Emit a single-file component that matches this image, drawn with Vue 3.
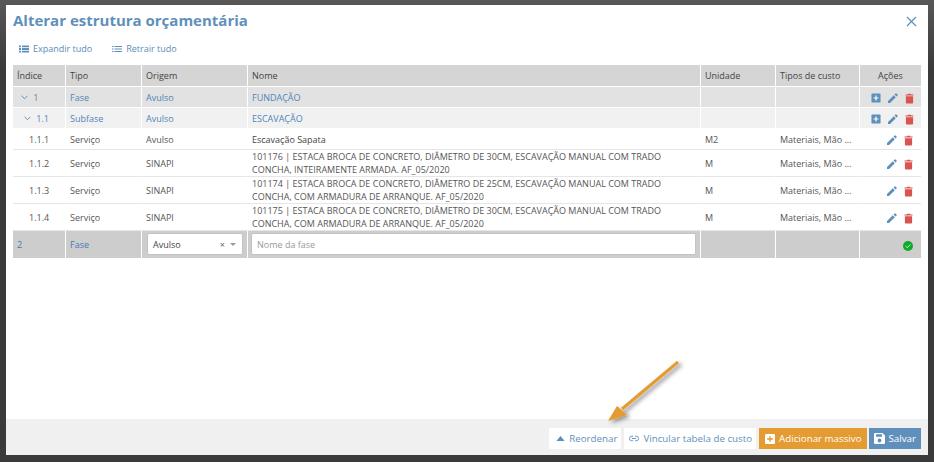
<template>
  <div class="overlay">
    <div class="modal">
      <header class="modal-head">
        <h1>Alterar estrutura orçamentária</h1>
        <svg class="close" width="11" height="11" viewBox="0 0 11 11">
          <path d="M1 1l9 9M10 1l-9 9" stroke="#5f90bc" stroke-width="1.2" fill="none" />
        </svg>
      </header>

      <div class="tree-actions">
        <span class="tree-link">
          <svg width="10" height="10" viewBox="0 0 10 10" fill="#5f90bc">
            <path d="M0 1.5h2v1.8H0zM3 1.5h7v1.8H3zM0 4.1h2v1.8H0zM3 4.1h7v1.8H3zM0 6.7h2v1.8H0zM3 6.7h7v1.8H3z" />
          </svg>
          Expandir tudo
        </span>
        <span class="tree-link">
          <svg width="10" height="10" viewBox="0 0 10 10" fill="#5f90bc">
            <path d="M0 2h1.5v1H0zM2.5 2H10v1H2.5zM0 4.5h1.5v1H0zM2.5 4.5H10v1H2.5zM0 7h1.5v1H0zM2.5 7H10v1H2.5z" />
          </svg>
          Retrair tudo
        </span>
      </div>

      <table class="grid">
        <colgroup>
          <col v-for="w in widths" :key="w.name" :style="{ width: w.px + 'px' }" />
        </colgroup>
        <thead>
          <tr>
            <th>Índice</th>
            <th>Tipo</th>
            <th>Origem</th>
            <th>Nome</th>
            <th>Unidade</th>
            <th>Tipos de custo</th>
            <th class="center">Ações</th>
          </tr>
        </thead>
        <tbody>
          <tr v-for="row in rows" :key="row.idx" :class="[row.kind, { single: row.nome.length === 1 }]">
            <td :class="'indent-' + row.depth">
              <svg v-if="row.kind !== 'item'" class="chev" width="7" height="5" viewBox="0 0 7 5">
                <path d="M.6.8l2.9 2.9L6.4.8" fill="none" stroke="#5f90bc" stroke-width="1" />
              </svg>
              {{ row.idx }}
            </td>
            <td>{{ row.tipo }}</td>
            <td>{{ row.origem }}</td>
            <td class="name">
              <template v-for="(line, i) in row.nome" :key="i">
                <div>{{ line }}</div>
              </template>
            </td>
            <td>{{ row.unidade }}</td>
            <td>{{ row.custo }}</td>
            <td class="acts">
              <svg v-if="row.kind !== 'item'" width="10" height="10" viewBox="0 0 11 11">
                <rect x=".5" y=".5" width="10" height="10" rx="1" fill="#5f90bc" />
                <path d="M5.5 2.8v5.4M2.8 5.5h5.4" stroke="#fff" stroke-width="1.3" />
              </svg>
              <svg width="10" height="10" viewBox="0 0 10 10">
                <path d="M0 10V8l5.8-5.8 2 2L2 10zM6.5 1.5L7.6.4q.4-.4.8 0l1.2 1.2q.4.4 0 .8L8.5 3.5z" fill="#5f90bc" />
              </svg>
              <svg width="9" height="11" viewBox="0 0 10 11">
                <path d="M1 3h8v7q0 1-1 1H2q-1 0-1-1zM.5 1H3l.5-.8h3L7 1h2.5v1.2H.5z" fill="#d9534f" />
              </svg>
            </td>
          </tr>
          <tr class="new-row">
            <td>2</td>
            <td>Fase</td>
            <td class="field">
              <div class="select">
                <span>Avulso</span>
                <span class="sel-x">×</span>
                <span class="sel-caret"></span>
              </div>
            </td>
            <td class="field"><input class="name-input" placeholder="Nome da fase" /></td>
            <td></td>
            <td></td>
            <td class="acts">
              <svg width="10" height="10" viewBox="0 0 10 10">
                <circle cx="5" cy="5" r="5" fill="#0eaa2a" />
                <path d="M2.6 5l1.7 1.7 3.1-3.1" fill="none" stroke="#d8f2dc" stroke-width="1" />
              </svg>
            </td>
          </tr>
        </tbody>
      </table>

      <div class="spacer"></div>

      <footer class="modal-foot">
        <button class="btn plain reorder">
          <svg width="9" height="5" viewBox="0 0 10 6"><path d="M5 0l5 6H0z" fill="#5f90bc" /></svg>
          Reordenar
        </button>
        <button class="btn plain">
          <svg width="10" height="7" viewBox="0 0 11 7">
            <path d="M4.5 1H3a2.5 2.5 0 000 5h1.5M6.5 1H8a2.5 2.5 0 010 5H6.5M3.2 3.5h4.6" fill="none" stroke="#5f90bc" stroke-width="1" />
          </svg>
          Vincular tabela de custo
        </button>
        <button class="btn orange">
          <svg width="10" height="10" viewBox="0 0 10 10">
            <rect width="10" height="10" rx="1" fill="#fff" />
            <path d="M5 2.2v5.6M2.2 5h5.6" stroke="#e49b32" stroke-width="1.4" />
          </svg>
          Adicionar massivo
        </button>
        <button class="btn blue">
          <svg width="11" height="11" viewBox="0 0 11 11">
            <path d="M0 1q0-1 1-1h7.5L11 2.5V10q0 1-1 1H1q-1 0-1-1zM2 1.2v2.6h6V1.2zM5.5 5.6a1.9 1.9 0 100 3.8 1.9 1.9 0 000-3.8z" fill="#fff" fill-rule="evenodd" />
          </svg>
          Salvar
        </button>
      </footer>

      <svg class="arrow" width="90" height="70" viewBox="0 0 90 70">
        <defs>
          <filter id="arrow-shadow" x="-20%" y="-20%" width="150%" height="150%">
            <feDropShadow dx="3" dy="2" stdDeviation="2" flood-color="#000" flood-opacity="0.45" />
          </filter>
        </defs>
        <g filter="url(#arrow-shadow)" fill="#e49b32">
          <path d="M73 4.15L71 1.85 15 48.85 17 51.15z" />
          <path d="M2 62l9-15 10 9z" />
        </g>
      </svg>
    </div>
  </div>
</template>

<script setup>
const widths = [
  { name: 'indice', px: 53 },
  { name: 'tipo', px: 76 },
  { name: 'origem', px: 106 },
  { name: 'nome', px: 453 },
  { name: 'unidade', px: 75 },
  { name: 'custo', px: 84 },
  { name: 'acoes', px: 61 }
]

const custo = 'Materiais, Mão ...'

const rows = [
  { idx: '1', kind: 'fase', depth: 0, tipo: 'Fase', origem: 'Avulso', nome: ['FUNDAÇÃO'], unidade: '', custo: '' },
  { idx: '1.1', kind: 'subfase', depth: 1, tipo: 'Subfase', origem: 'Avulso', nome: ['ESCAVAÇÃO'], unidade: '', custo: '' },
  { idx: '1.1.1', kind: 'item', depth: 2, tipo: 'Serviço', origem: 'Avulso', nome: ['Escavação Sapata'], unidade: 'M2', custo },
  {
    idx: '1.1.2', kind: 'item', depth: 2, tipo: 'Serviço', origem: 'SINAPI',
    nome: ['101176 | ESTACA BROCA DE CONCRETO, DIÂMETRO DE 30CM, ESCAVAÇÃO MANUAL COM TRADO', 'CONCHA, INTEIRAMENTE ARMADA. AF_05/2020'],
    unidade: 'M', custo
  },
  {
    idx: '1.1.3', kind: 'item', depth: 2, tipo: 'Serviço', origem: 'SINAPI',
    nome: ['101174 | ESTACA BROCA DE CONCRETO, DIÂMETRO DE 25CM, ESCAVAÇÃO MANUAL COM TRADO', 'CONCHA, COM ARMADURA DE ARRANQUE. AF_05/2020'],
    unidade: 'M', custo
  },
  {
    idx: '1.1.4', kind: 'item', depth: 2, tipo: 'Serviço', origem: 'SINAPI',
    nome: ['101175 | ESTACA BROCA DE CONCRETO, DIÂMETRO DE 30CM, ESCAVAÇÃO MANUAL COM TRADO', 'CONCHA, COM ARMADURA DE ARRANQUE. AF_05/2020'],
    unidade: 'M', custo
  }
]
</script>

<style>
html, body {
  margin: 0;
  height: 100%;
  overflow: hidden;
}
</style>

<style scoped>
.overlay {
  width: 934px;
  height: 462px;
  box-sizing: border-box;
  padding: 5px 6px 7px;
  background: linear-gradient(#585858, #3a3a3a 15%, #3a3a3a);
  font-family: "Open Sans", sans-serif;
  font-size: 9px;
  color: #555;
}

.modal {
  position: relative;
  height: 100%;
  background: #fff;
  display: flex;
  flex-direction: column;
}

.modal-head {
  display: flex;
  justify-content: space-between;
  align-items: center;
  padding: 6px 11px 0 7px;
  height: 18px;
}

.modal-head h1 {
  margin: 0;
  font-size: 15px;
  font-weight: 700;
  color: #5f90bc;
}

.tree-actions {
  display: flex;
  gap: 20px;
  padding: 12px 0 0 13px;
  height: 15px;
  margin-bottom: 9px;
}

.tree-link {
  display: flex;
  align-items: center;
  gap: 4px;
  color: #5a8cba;
}

.grid {
  margin-left: 7px;
  width: 908px;
  table-layout: fixed;
  border-collapse: separate;
  border-spacing: 0;
}

.grid th,
.grid td {
  padding: 0 4px;
  border-right: 1px solid #fff;
  border-bottom: 1px solid #e6e6e6;
  white-space: nowrap;
  overflow: hidden;
  line-height: 13px;
  box-sizing: border-box;
}

.grid th:last-child,
.grid td:last-child {
  border-right: none;
}

.grid th {
  height: 22px;
  background: #d5d5d5;
  font-weight: 400;
  color: #444;
  text-align: left;
  border-bottom-color: #fff;
}

.grid th.center {
  text-align: center;
}

tr.fase td,
tr.subfase td {
  height: 21px;
  color: #4f86b8;
  font-weight: 500;
  border-bottom-color: #fff;
}

tr.fase td {
  background: #e2e2e2;
}

tr.subfase td {
  background: #f1f1f1;
}

tr.item td {
  height: 27px;
}

tr.item.single td {
  height: 21px;
}

tr.item td.name {
  color: #555;
  line-height: 13px;
}

tr.item.single td.name {
  color: #444;
}

tr.new-row td {
  height: 28px;
  background: #cdcdcd;
  color: #3f7cb5;
  font-weight: 500;
  border-bottom-color: #fff;
}

.grid td.field {
  padding: 0 4px 1px 3px;
}

.indent-0 {
  padding-left: 8px !important;
}

.indent-1 {
  padding-left: 11px !important;
}

.indent-2 {
  padding-left: 16px !important;
}

.chev {
  margin-right: 3px;
  vertical-align: 1px;
}

.acts {
  text-align: right;
  padding-right: 8px !important;
}

.acts svg {
  margin-left: 7px;
  vertical-align: middle;
}

.select {
  height: 22px;
  margin-left: 2px;
  box-sizing: border-box;
  padding: 0 6px 0 5px;
  background: #fff;
  border: 1px solid #c4c4c4;
  border-radius: 2px;
  display: flex;
  align-items: center;
  color: #444;
  font-weight: 400;
}

.select span:first-child {
  flex: 1;
}

.sel-x {
  color: #666;
  margin-right: 5px;
}

.sel-caret {
  width: 0;
  height: 0;
  border-left: 3px solid transparent;
  border-right: 3px solid transparent;
  border-top: 3px solid #999;
}

.name-input {
  display: block;
  width: 100%;
  height: 22px;
  box-sizing: border-box;
  padding: 0 5px;
  border: 1px solid #c4c4c4;
  border-radius: 2px;
  background: #fff;
  font: 9px "Open Sans", sans-serif;
  outline: none;
}

.name-input::placeholder {
  color: #999;
}

.spacer {
  flex: 1;
}

.modal-foot {
  height: 36px;
  box-sizing: border-box;
  background: #f0f0f0;
  display: flex;
  justify-content: flex-end;
  align-items: flex-start;
  gap: 3px;
  padding: 9px 7px 0 0;
}

.btn {
  height: 21px;
  border: none;
  padding: 0 4px 0 5px;
  display: flex;
  align-items: center;
  gap: 4px;
  font: 9.75px "Open Sans", sans-serif;
  white-space: nowrap;
}

.btn.reorder {
  padding-left: 7px;
}

.btn.plain {
  background: #fff;
  color: #5f90bc;
}

.btn.orange {
  background: #e49b32;
  color: #fff;
  padding: 0 5px 0 6px;
  margin-right: -1px;
}

.btn.blue {
  background: #5f90bc;
  color: #fff;
  padding: 0 5px;
}

.close {
  margin-top: 2px;
}

.arrow {
  position: absolute;
  left: 600px;
  top: 354px;
}
</style>
